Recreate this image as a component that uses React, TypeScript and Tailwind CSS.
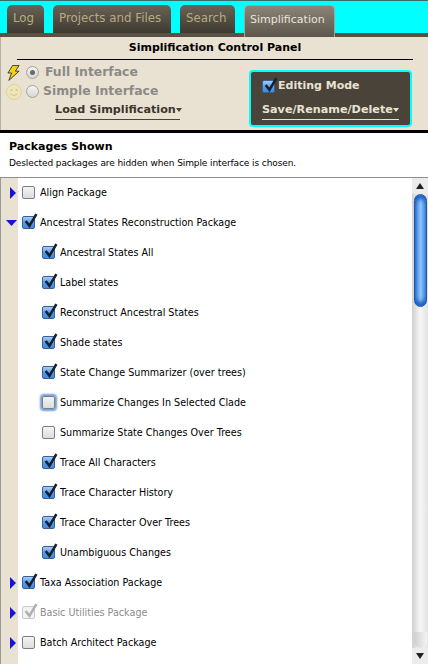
type CheckState = "on" | "off" | "focus" | "dim";

interface RowProps {
    label: string;
    state: CheckState;
    arrow?: "right" | "down";
    child?: boolean;
}

const rows: RowProps[] = [
    { label: "Align Package", state: "off", arrow: "right" },
    { label: "Ancestral States Reconstruction Package", state: "on", arrow: "down" },
    { label: "Ancestral States All", state: "on", child: true },
    { label: "Label states", state: "on", child: true },
    { label: "Reconstruct Ancestral States", state: "on", child: true },
    { label: "Shade states", state: "on", child: true },
    { label: "State Change Summarizer (over trees)", state: "on", child: true },
    { label: "Summarize Changes In Selected Clade", state: "focus", child: true },
    { label: "Summarize State Changes Over Trees", state: "off", child: true },
    { label: "Trace All Characters", state: "on", child: true },
    { label: "Trace Character History", state: "on", child: true },
    { label: "Trace Character Over Trees", state: "on", child: true },
    { label: "Unambiguous Changes", state: "on", child: true },
    { label: "Taxa Association Package", state: "on", arrow: "right" },
    { label: "Basic Utilities Package", state: "dim", arrow: "right" },
    { label: "Batch Architect Package", state: "off", arrow: "right" },
];

function Checkbox({ state }: { state: CheckState }) {
    const box = {
        on: "border-[#3a5f95] bg-gradient-to-b from-[#a9cdf3] via-[#5b9de8] to-[#3f8ae0]",
        off: "border-[#7e7e7e] bg-gradient-to-b from-[#f4f4f4] to-[#dcdcdc]",
        focus: "border-[#7e7e7e] bg-gradient-to-b from-[#f4f4f4] to-[#dcdcdc] shadow-[0_0_2px_2px_#6d9fd8]",
        dim: "border-[#c8c8c8] bg-[#f3f3f3]",
    }[state];

    return (
        <span className={`relative block h-[13px] w-[13px] shrink-0 rounded-[2px] border ${box}`}>
            {(state === "on" || state === "dim") && (
                <svg viewBox="0 0 14 14" className="absolute -top-[4px] left-0 h-[15px] w-[15px]">
                    <path
                        d="M2.5 7.5 L6 12 L12.5 1"
                        fill="none"
                        stroke={state === "on" ? "#17202e" : "#b0b0b0"}
                        strokeWidth="2.4"
                    />
                </svg>
            )}
        </span>
    );
}

function Arrow({ dir }: { dir: "right" | "down" }) {
    return (
        <svg viewBox="0 0 12 12" className={dir === "right" ? "ml-[9px] h-[12px] w-[6px]" : "ml-[5px] h-[6px] w-[11px]"} preserveAspectRatio="none">
            <polygon points={dir === "right" ? "0,0 12,6 0,12" : "0,0 12,0 6,12"} fill="#1a12d8" />
        </svg>
    );
}

function Radio({ on }: { on?: boolean }) {
    return (
        <span className="flex h-[13px] w-[13px] shrink-0 items-center justify-center rounded-full border border-[#a5a29b] bg-gradient-to-b from-[#f4f4f4] to-[#d6d6d6]">
            {on && <span className="block h-[5px] w-[5px] rounded-full bg-[#6a6a6a]" />}
        </span>
    );
}

function Row({ label, state, arrow, child }: RowProps) {
    return (
        <div className="flex h-[30px] items-center">
            <div className="flex h-full w-[17px] shrink-0 items-center bg-[#e9e2d3]">
                {arrow && <Arrow dir={arrow} />}
            </div>
            <div className={`flex items-center gap-[5px] ${child ? "pl-[24px]" : "pl-[4px]"}`}>
                <Checkbox state={state} />
                <span className={`text-[9.6px] whitespace-nowrap ${state === "dim" ? "text-[#8c8c8c]" : "text-black"}`}>{label}</span>
            </div>
        </div>
    );
}

function Scrollbar() {
    return (
        <div className="flex w-[16px] shrink-0 flex-col items-center bg-gradient-to-r from-[#cfcfcf] via-[#f6f6f6] to-[#e4e4e4]">
            <div className="flex h-[16px] w-full items-center justify-center bg-[#ececec]">
                <span className="block h-0 w-0 border-x-[4px] border-b-[6px] border-x-transparent border-b-[#222]" />
            </div>
            <div className="h-[113px] w-[13px] rounded-full border border-[#1e55a8] bg-gradient-to-r from-[#2f78d8] via-[#8fc4f8] to-[#3b86e2] shadow-[inset_0_6px_4px_-2px_#1f5fc0,inset_0_-6px_4px_-2px_#1f5fc0]" />
            <div className="flex-1" />
            <div className="h-[16px] w-[13px] rounded-b-full bg-gradient-to-r from-[#cfcfcf] to-[#f4f4f4]" />
            <div className="flex h-[16px] w-full items-center justify-center bg-[#ececec]">
                <span className="block h-0 w-0 border-x-[4px] border-t-[6px] border-x-transparent border-t-[#222]" />
            </div>
        </div>
    );
}

function Tab({ label, width, active }: { label: string; width: string; active?: boolean }) {
    return active ? (
        <div className={`flex h-[32px] items-center rounded-t-[5px] border-x border-t border-[#a8a294] bg-gradient-to-b from-[#8b8478] to-[#5d564c] pb-[2px] pl-[5px] text-[11px] text-[#ece5d5] ${width}`}>
            {label}
        </div>
    ) : (
        <div className={`flex h-[28px] items-center rounded-t-[5px] bg-gradient-to-b from-[#6a6358] to-[#3f3a30] pl-[6px] text-[11.8px] text-[#b9ab80] ${width}`}>
            {label}
        </div>
    );
}

export default function App() {
    return (
        <div className="flex h-[664px] w-[428px] flex-col overflow-hidden bg-white font-['DejaVu_Sans',sans-serif]">
            {/* Tabs */}
            <div className="flex h-[37px] shrink-0 items-start gap-[9px] bg-[linear-gradient(to_bottom,#3a6a6a_1px,#00ffff_1px,#00ffff_33px,#5a5145_33px)] pt-[5px] pl-[7px]">
                <Tab label="Log" width="w-[37px]" />
                <Tab label="Projects and Files" width="w-[118px]" />
                <Tab label="Search" width="w-[55px]" />
                <Tab label="Simplification" width="w-[91px]" active />
            </div>

            {/* Control panel */}
            <div className="flex h-[93px] shrink-0 flex-col border-l border-[#b5b0a5] bg-[#e9e2d3]">
                <div className="mr-[15px] ml-[16px] flex h-[23px] shrink-0 items-center justify-center border-b border-black pt-[1px] text-[11px] font-bold text-black">
                    Simplification Control Panel
                </div>
                <div className="flex justify-between pr-[16px]">
                    <div className="flex flex-col pt-[3px] pl-[6px]">
                        <div className="flex h-[19px] items-center gap-[6px]">
                            <svg viewBox="0 0 14 16" className="h-[16px] w-[13px]">
                                <polygon points="6,0 13,0 9,6 13,6 2,16 5,8 1,8" fill="#f6d312" stroke="#111" strokeWidth="0.8" />
                            </svg>
                            <Radio on />
                            <span className="text-[12.4px] font-bold whitespace-nowrap text-[#8b8a86]">Full Interface</span>
                        </div>
                        <div className="-ml-[1px] flex h-[19px] items-center gap-[4px]">
                            <svg viewBox="0 0 16 16" className="h-[16px] w-[16px]">
                                <circle cx="8" cy="8" r="7.5" fill="#efe6b8" stroke="#dcd3a6" />
                                <circle cx="5.5" cy="6" r="1" fill="#cfc69a" />
                                <circle cx="10.5" cy="6" r="1" fill="#cfc69a" />
                                <path d="M4.5 10 Q8 13 11.5 10" fill="none" stroke="#cfc69a" />
                            </svg>
                            <Radio />
                            <span className="text-[12.4px] font-bold whitespace-nowrap text-[#8b8a86]">Simple Interface</span>
                        </div>
                        <div className="mt-[1px] ml-[48px] flex w-[125px] items-center justify-between border-b border-[#4a4339] pb-[1px] text-[11.2px] leading-[16px] font-bold whitespace-nowrap text-[#3c362c]">
                            Load Simplification
                            <span className="block h-0 w-0 border-x-[3px] border-t-[4px] border-x-transparent border-t-[#4a4339]" />
                        </div>
                    </div>
                    <div className="mt-[10px] flex h-[57px] w-[163px] flex-col rounded-[4px] border-2 border-[#00ffff] bg-[#4a4339] px-[11px] pt-[6px]">
                        <div className="flex h-[16px] items-center gap-[3px] text-[11px] font-bold whitespace-nowrap text-[#e9e2d3]">
                            <Checkbox state="on" />
                            Editing Mode
                        </div>
                        <div className="mt-[8px] flex items-center justify-between border-b border-[#e9e2d3] pb-[1px] text-[11.2px] leading-[16px] font-bold whitespace-nowrap text-[#e9e2d3]">
                            Save/Rename/Delete
                            <span className="block h-0 w-0 border-x-[3px] border-t-[4px] border-x-transparent border-t-[#e9e2d3]" />
                        </div>
                    </div>
                </div>
            </div>

            {/* Packages header */}
            <div className="flex h-[48px] shrink-0 flex-col border-t-[3px] border-b border-t-black border-b-[#8e8e8e] px-[9px] pt-[5px]">
                <div className="text-[11px] leading-[18px] font-bold text-black">Packages Shown</div>
                <div className="text-[9px] leading-[14px] tracking-[-0.1px] whitespace-nowrap text-black">Deslected packages are hidden when Simple interface is chosen.</div>
            </div>

            {/* Package list */}
            <div className="flex min-h-0 flex-1 border-l border-[#9a9a9a]">
                <div className="min-w-0 flex-1 overflow-hidden">
                    {rows.map((r) => (
                        <Row key={r.label} {...r} />
                    ))}
                    <div className="h-[30px] w-[17px] bg-[#e9e2d3]" />
                </div>
                <Scrollbar />
            </div>
        </div>
    );
}
